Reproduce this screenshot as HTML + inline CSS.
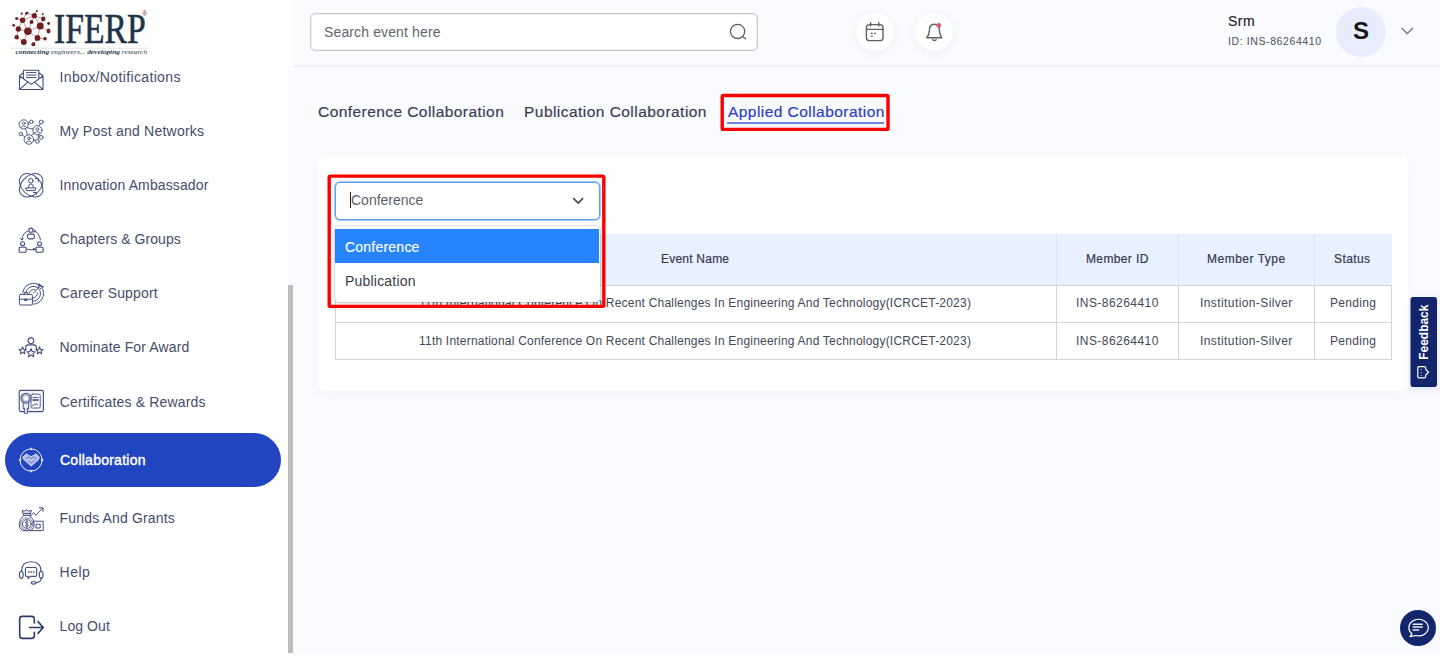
<!DOCTYPE html>
<html lang="en">
<head>
<meta charset="utf-8">
<title>IFERP Dashboard - Collaboration</title>
<style>
*{box-sizing:border-box;margin:0;padding:0}
html,body{width:1440px;height:656px;overflow:hidden;background:#fafbff;font-family:"Liberation Sans",Arial,sans-serif;color:#3a3f5c}
.t{position:absolute;white-space:nowrap;line-height:18px}
#sidebar{position:absolute;left:0;top:0;width:288px;height:656px;background:#fff}
#sidetop{position:absolute;left:0;top:0;width:293px;height:70px;background:#fff}
#scroll{position:absolute;left:288px;top:285px;width:5px;height:368px;background:#bdbdbd}
#botline{position:absolute;left:0;top:655px;width:1440px;height:1px;background:#fff}
#sbgap{position:absolute;left:288px;top:653px;width:5px;height:3px;background:#fff}
#icons{position:absolute;left:0;top:0}
.lbl{font-size:14px;color:#464c6b;left:60px}
#pill{position:absolute;left:5px;top:433px;width:276px;height:54px;background:#2145c0;border-radius:27px}
#header{position:absolute;left:293px;top:0;width:1147px;height:67px;background:#fafbff;border-bottom:2px solid #f1f3fb}
#search{position:absolute;left:310px;top:13px;width:448px;height:38px;border:1px solid #c9c9cc;border-radius:5px;background:#fff;box-shadow:inset 0 0 0 1px #f1f1f2}
.circ{position:absolute;top:13px;width:38px;height:38px;border-radius:50%;background:#fff;box-shadow:0 2px 8px rgba(80,90,140,.07)}
#avatar{position:absolute;left:1336px;top:7px;width:50px;height:50px;border-radius:50%;background:#e8edfe}
.tab{font-size:15.5px;color:#3a3e55;-webkit-text-stroke:.2px #3a3e55}
#card{position:absolute;left:318px;top:156px;width:1090px;height:235px;background:#fff;border-radius:6px;box-shadow:0 3px 8px rgba(90,110,200,.045)}
#tbl{position:absolute;left:335px;top:234px;width:1057px;height:126px}
#tbl div{position:absolute}
.red{position:absolute;border:3px solid #ff0000;border-radius:2px}
#sel{position:absolute;left:335px;top:182px;width:265px;height:38px;border:1px solid #5f9df3;border-radius:5px;background:#fff;box-shadow:0 0 0 1px #a9c9f8}
#menu{position:absolute;left:335px;top:226px;width:265px;height:76px;background:#fff;box-shadow:0 0 0 1px rgba(0,0,0,.1),0 3px 6px rgba(0,0,0,.12);border-radius:4px}
#fb{position:absolute;left:1411px;top:297px;width:26px;height:90px;background:#14266b;border-radius:3px;box-shadow:-.5px 0 0 #14266b,0 2px 6px rgba(20,38,107,.12)}
#chat{position:absolute;left:1400px;top:610px;width:36px;height:36px;border-radius:50%;background:#14266b}
.th{font-size:12px;color:#343a4e;-webkit-text-stroke:.2px #343a4e}
.td{font-size:12px;color:#444857}
</style>
</head>
<body>
<div id="sidebar"></div>
<div id="sidetop"></div>
<div id="scroll"></div><div id="sbgap"></div><div id="botline"></div>
<div id="pill"></div>
<!--ICONS_START--><svg id="icons" width="293" height="656" viewBox="0 0 293 656">
<!-- logo -->
<g stroke="#8a3a3a" stroke-width=".5" fill="none">
<path d="M27.9 31.3L40.2 26M27.9 31.3L22.6 20.3M27.9 31.3L18.3 29M27.9 31.3L37.5 37.9M27.9 31.3L23.8 42M27.9 31.3L31.5 22.1M40.2 26L34.3 15.7M40.2 26L37.5 37.9M40.2 26L43.2 18.9M40.2 26L48.5 31.1M22.6 20.3L34.3 15.7M22.6 20.3L18.3 29M22.6 20.3L26.7 13.2M34.3 15.7L43.2 18.9M34.3 15.7L36.8 11.1M34.3 15.7L26.7 13.2M37.5 37.9L45 38.8M37.5 37.9L33.4 44.3M18.3 29L16.7 37.2M31.5 22.1L34.3 15.7M23.8 42L16.7 37.2M22.6 20.3L16.7 18.5"/>
</g>
<g fill="#6f1f20">
<circle cx="27.9" cy="31.3" r="3.8"/><circle cx="40.2" cy="26" r="3.5"/><circle cx="22.6" cy="20.3" r="2.7"/><circle cx="34.3" cy="15.7" r="2.6"/><circle cx="18.3" cy="29" r="2.7"/><circle cx="37.5" cy="37.9" r="2.9"/><circle cx="23.8" cy="42" r="3"/><circle cx="31.5" cy="22.1" r="2"/><circle cx="43.2" cy="18.9" r="2.3"/><ellipse cx="48.5" cy="31.1" rx="2" ry="2.5"/><circle cx="16.7" cy="37.2" r="2.2"/><circle cx="33.4" cy="44.3" r="2"/><circle cx="45" cy="38.8" r="1.8"/><circle cx="48.6" cy="23.5" r="1.4"/><circle cx="16.7" cy="18.5" r="1.5"/><circle cx="13.7" cy="25.3" r="1.4"/><ellipse cx="26.7" cy="13.2" rx="2" ry="1.2" transform="rotate(-25 26.7 13.2)"/><circle cx="21.7" cy="13.7" r="1.1"/><circle cx="36.8" cy="11.1" r="1"/><circle cx="42.7" cy="13.9" r="1"/>
</g>
<text x="54" y="42.9" font-family="'Liberation Serif',serif" font-size="41.7" fill="#1d3349" stroke="#1d3349" stroke-width=".6" textLength="91.6" lengthAdjust="spacingAndGlyphs">IFERP</text>
<text x="142.3" y="16.2" font-family="'Liberation Sans',sans-serif" font-size="6.5" fill="#7a2a2a">®</text>
<path d="M10 48.2H148" stroke="#d9d9d9" stroke-width=".8"/>
<text x="15.6" y="54.2" font-family="'Liberation Serif',serif" font-size="6.6" font-style="italic" fill="#2a3a4c" textLength="131.5" lengthAdjust="spacingAndGlyphs"><tspan font-weight="bold">connecting</tspan> engineers... <tspan font-weight="bold">developing</tspan> research</text>

<g fill="none" stroke="#434d7d" stroke-width="1.1" stroke-linecap="round" stroke-linejoin="round">
<!-- inbox -->
<path d="M19.5 75.8V89.5H43V75.8M19.5 75.8L23.4 72.8M43 75.8L38.8 72.8M23.4 78.6V70.3H38.8V78.6M19.5 76L31.2 84.4L43 76M19.7 89.3L27.8 82.2M42.8 89.3L34.7 82.2"/>
<path d="M26.5 72.6H36M26.5 75.1H36M26.5 77.6H36" stroke-width="1"/>
<!-- network -->
<g stroke-width=".9" transform="translate(0 .7)">
<circle cx="23.7" cy="123.7" r="4.6"/><circle cx="37.4" cy="129.5" r="4.6"/><circle cx="28.9" cy="138.8" r="4.8"/>
<circle cx="31.4" cy="121.2" r="1.7"/><circle cx="41.2" cy="121.3" r="1.9"/><circle cx="20.8" cy="133.3" r="1.7"/><circle cx="41.2" cy="136.7" r="1.9"/><circle cx="37.4" cy="140.7" r="1.9"/>
<path d="M28 122.3L29.8 121.7M40.3 123L38.9 125.2M27 127L33.2 128.4M25.5 128L27.5 134.2M33.8 132.3L31.5 134.8M22.3 134.2L24.8 136.3M39 133.8L40.2 135M33.5 139.6L35.6 140.2M38.5 134L38 138.8"/>
<circle cx="23.7" cy="122.6" r="1.3"/><path d="M21.2 126.6Q23.7 123.6 26.2 126.6"/>
<circle cx="37.4" cy="128.4" r="1.3"/><path d="M34.9 132.4Q37.4 129.4 39.9 132.4"/>
<circle cx="28.9" cy="137.6" r="1.3"/><path d="M26.3 141.8Q28.9 138.6 31.5 141.8"/>
</g>
<!-- innovation -->
<g stroke-width="1">
<ellipse cx="31.2" cy="185.3" rx="13.5" ry="9.5" transform="rotate(45 31.2 185.3)"/>
<ellipse cx="31.2" cy="185.3" rx="13.5" ry="9.5" transform="rotate(-45 31.2 185.3)"/>
<circle cx="30.9" cy="180.8" r="2.3"/>
<path d="M28.4 187.5Q28.6 183.9 30.9 183.9Q33.2 183.9 33.4 187.5M26 188H36L35 190.6H27ZM35.4 178.5H38.2V181.6M33.5 192.5H36.3V194.6"/>
</g>
<!-- chapters -->
<g stroke-width="1.1">
<circle cx="30.9" cy="230.2" r="2.1"/><rect x="27.5" y="234.1" width="6.8" height="4.8" rx="1.6"/>
<circle cx="22.6" cy="243.7" r="2"/><rect x="19.2" y="247.2" width="6.9" height="5" rx=".8"/>
<circle cx="39.5" cy="243.7" r="2"/><rect x="36.1" y="247.2" width="7" height="5" rx=".8"/>
<path d="M21.8 239.6Q22.6 232.8 28 230.9M34 230.8Q39.6 232.8 40.4 239.8M26.8 249.2Q31 250.6 35.3 249.2" stroke-width="1"/>
<path d="M20.6 238.6L21.8 240.2L23.2 238.7M34.2 229.6L35.8 231.5L33.6 232M33.4 248.3L35.3 249.2L33.8 250.6" stroke-width="1"/>
</g>
<!-- career -->
<g stroke-width="1">
<path d="M22.8 292.5A10.6 10.6 0 0 1 40.5 286.2M42.6 288.9A10.6 10.6 0 0 1 33 304.2"/>
<path d="M25.8 292.8A7.5 7.5 0 0 1 37.5 287.6M40 290.8A7.5 7.5 0 0 1 33.2 301.2"/>
<path d="M29.2 292.8A4.4 4.4 0 0 1 35.2 289.8M37.3 293A4.4 4.4 0 0 1 33.2 298"/>
<path d="M33.5 293.2L41.5 285M38.2 287.8L39.2 283.6L41 286.2L43.6 286.6L39.6 289.2Z" />
<rect x="19.4" y="294.4" width="13" height="10.6" rx="1.2" fill="#fff"/>
<path d="M19.4 299.2H32.4M24.2 294.2V292.6H27.8V294.2M25 299.2H27V300.6H25Z"/>
</g>
<!-- nominate -->
<g stroke-width="1.1">
<circle cx="30.9" cy="340.8" r="2.9"/>
<path d="M25.6 349.5V347.6Q25.6 344.9 28.4 344.9H33.6Q36.4 344.9 36.4 347.6V349.5"/>
<path d="M22.6 346.9L23.6 349.3L26.2 349.5L24.2 351.2L24.8 353.8L22.6 352.4L20.4 353.8L21 351.2L19 349.5L21.6 349.3Z" fill="#fff"/>
<path d="M39.5 346.9L40.5 349.3L43.1 349.5L41.1 351.2L41.7 353.8L39.5 352.4L37.3 353.8L37.9 351.2L35.9 349.5L38.5 349.3Z" fill="#fff"/>
<path d="M31.1 348.6L32.3 351.5L35.4 351.7L33 353.7L33.8 356.8L31.1 355.1L28.4 356.8L29.2 353.7L26.8 351.7L29.9 351.5Z" fill="#fff"/>
</g>
<!-- certificate -->
<g stroke-width="1.1">
<rect x="19.2" y="390.4" width="24.2" height="21.2" rx="1.6" fill="#f5f6fb"/>
<rect x="31" y="394.2" width="9.2" height="13.8" rx="1.4" fill="#fff" stroke-width=".9"/>
<path d="M32.8 397.4H38.2M32.8 399.4H38.2M32.8 400.6H38.2M32.4 405.4L35 404.6L36.6 403.6L37.6 405.2" stroke-width=".9"/>
<path d="M23.2 402.2V409.2L24.6 408L24.6 413.4H27.4V408.2L28.6 409.2V402.2" fill="#eceef6" stroke-width=".9"/>
<circle cx="25.9" cy="398.2" r="5" fill="#dfe3f0"/><circle cx="25.9" cy="398.2" r="3.6" stroke-width=".6"/><circle cx="25.9" cy="398.2" r="1.9" fill="#fff" stroke="none"/>
</g>
<!-- collaboration -->
<g stroke="#fff" stroke-width="1" opacity=".92">
<circle cx="31.1" cy="460" r="11.1"/>
<path d="M31.1 448.2V449.6M31.1 470.4V471.8M19.3 460H20.7M41.5 460H42.9" stroke-width="1.4"/>
<path d="M22.8 457.2L26.4 453.9L28.6 455.4L31.1 456.6L33.6 455.4L35.8 453.9L39.4 457.2L38.4 459.6L31.2 466L23.8 459.6Z" fill="#fff" fill-opacity=".72" stroke-opacity=".8"/>
<path d="M26.2 458.2L29 456.8L31.2 458.6L33.4 456.8L36.2 458.4M28.2 461L31.2 463.2L34.4 460.6" stroke="#2145c0" stroke-width=".8" stroke-opacity=".7"/>
</g>
<!-- funds -->
<g stroke-width="1">
<path d="M23.6 515.6L22.2 510.6L24.6 511.2L26.6 509.8L28.6 511.2L31.4 510.4L29.8 515.6M23.8 513.4H29.8" fill="#e9ebf4"/>
<path d="M23.6 515.6Q19.2 519 19.2 524.4Q19.2 530.8 26 530.8H28Q34.2 530.8 34.2 524.4Q34.2 519 29.8 515.6Z" fill="#fff"/>
<circle cx="26.8" cy="524" r="4.4"/><circle cx="26.8" cy="524" r="6.1" stroke-width=".7"/>
<path d="M28.2 522.2Q26.8 521 25.6 522Q24.8 523.4 26.8 524Q28.8 524.6 28 526Q26.8 527 25.2 525.8M26.8 520.6V527.6" stroke-width=".9"/>
<path d="M29.8 517L33.6 512.6L35.8 515.2L42.6 508.2M39.4 507.8H43V511.4"/>
<path d="M33.6 521.2H43.2V530.6H30M36.4 524.2H40.2V528H36.4Z"/>
</g>
<!-- help -->
<g stroke-width="1.1">
<path d="M21.4 571.6Q21.4 561.8 31.2 561.8Q41.1 561.8 41.1 571.6"/>
<ellipse cx="21.3" cy="574.8" rx="1.9" ry="3.6"/><ellipse cx="41.2" cy="574.8" rx="1.9" ry="3.6"/>
<path d="M41.2 578.4Q41.2 582 36 582.6"/><ellipse cx="33.6" cy="582.8" rx="2.3" ry="1.3"/>
<path d="M26.9 567.5H35.2Q36.7 567.5 36.7 569V574.9Q36.7 576.4 35.2 576.4H30.4L28.2 578.6V576.4H26.9Q25.4 576.4 25.4 574.9V569Q25.4 567.5 26.9 567.5Z"/>
<path d="M28.4 572H28.9M30.9 572H31.4M33.4 572H33.9" stroke-width="1.3"/>
</g>
<!-- logout -->
<g stroke="#2f3a6c" stroke-width="1.6">
<path d="M34.3 623V619Q34.3 616.4 31.7 616.4H22.3Q19.7 616.4 19.7 619V635.8Q19.7 638.4 22.3 638.4H31.7Q34.3 638.4 34.3 635.8V632.4"/>
<path d="M29.6 627.5H42.8M38 621.6L43.2 627.5L38 633.4"/>
</g>
</g>
</svg>
<!--ICONS_END-->
<div class="t lbl" id="l0" style="left:59.6px;top:68px;letter-spacing:0.356px">Inbox/Notifications</div>
<div class="t lbl" id="l1" style="left:59.6px;top:122px;letter-spacing:0.232px">My Post and Networks</div>
<div class="t lbl" id="l2" style="left:59.6px;top:176px;letter-spacing:0.12px">Innovation Ambassador</div>
<div class="t lbl" id="l3" style="left:59.8px;top:230px;letter-spacing:0.076px">Chapters &amp; Groups</div>
<div class="t lbl" id="l4" style="left:59.8px;top:284px;letter-spacing:0.168px">Career Support</div>
<div class="t lbl" id="l5" style="left:59.6px;top:338px;letter-spacing:0.141px">Nominate For Award</div>
<div class="t lbl" id="l6" style="left:59.8px;top:393px;letter-spacing:0.154px">Certificates &amp; Rewards</div>
<div class="t lbl" id="l7" style="left:60px;top:451px;color:#fff;-webkit-text-stroke:.42px #fff;letter-spacing:0.248px">Collaboration</div>
<div class="t lbl" id="l8" style="left:59.6px;top:509px;letter-spacing:0.158px">Funds And Grants</div>
<div class="t lbl" id="l9" style="left:59.6px;top:563px;letter-spacing:0.45px">Help</div>
<div class="t lbl" id="l10" style="left:59.6px;top:617px;letter-spacing:0.069px">Log Out</div>

<div id="header"></div>
<div id="search"></div>
<div class="t" id="h0" style="left:324px;top:23px;font-size:14px;color:#62656c;letter-spacing:0.129px">Search event here</div>
<div class="circ" style="left:856px"></div>
<div class="circ" style="left:915px"></div>
<div class="t" id="h1" style="left:1228px;top:12px;font-size:14px;color:#1f2024;-webkit-text-stroke:.15px #1f2024;letter-spacing:0.5px">Srm</div>
<div class="t" id="h2" style="left:1228px;top:32px;font-size:10.5px;color:#4d5058;letter-spacing:0.601px">ID: INS-86264410</div>
<div id="avatar"></div>
<div class="t" id="h3" style="left:1353px;top:13px;font-size:24px;line-height:36px;font-weight:bold;color:#151515;letter-spacing:0px">S</div>


<div class="t tab" id="t0" style="left:318px;top:103px;letter-spacing:0.434px">Conference Collaboration</div>
<div class="t tab" id="t1" style="left:524px;top:103px;letter-spacing:0.459px">Publication Collaboration</div>
<div class="t tab" id="t2" style="left:728px;top:103px;color:#2b40c2;-webkit-text-stroke:.2px #2b40c2;letter-spacing:0.45px">Applied Collaboration</div>
<div style="position:absolute;left:727px;top:122px;width:157px;height:2px;background:#6f84da"></div>
<svg style="position:absolute;left:700px;top:80px" width="220" height="70" viewBox="700 80 220 70"><rect x="722.2" y="95.5" width="165.8" height="33.9" rx="1.2" fill="none" stroke="#ff0000" stroke-width="3.4"/></svg>

<div id="card"></div>
<div id="tbl">
  <div style="left:0;top:0;width:1057px;height:52px;background:#e7f1ff"></div>
  <div style="left:721px;top:0;width:1px;height:52px;background:#dce2fa"></div>
  <div style="left:843px;top:0;width:1px;height:52px;background:#dce2fa"></div>
  <div style="left:979px;top:0;width:1px;height:52px;background:#dce2fa"></div>
  <div style="left:0;top:51px;width:1057px;height:75px;border:1px solid #d4d4d4"></div>
  <div style="left:0;top:88px;width:1057px;height:1px;background:#d4d4d4"></div>
  <div style="left:721px;top:51px;width:1px;height:75px;background:#d4d4d4"></div>
  <div style="left:843px;top:51px;width:1px;height:75px;background:#d4d4d4"></div>
  <div style="left:979px;top:51px;width:1px;height:75px;background:#d4d4d4"></div>
</div>
<div class="t th" id="c0" style="left:661px;top:250px;letter-spacing:0.221px">Event Name</div>
<div class="t th" id="c1" style="left:1086px;top:250px;letter-spacing:0.37px">Member ID</div>
<div class="t th" id="c2" style="left:1207px;top:250px;letter-spacing:0.5px">Member Type</div>
<div class="t th" id="c3" style="left:1334px;top:250px;letter-spacing:0.4px">Status</div>
<div class="t td" id="r0" style="left:419px;top:294px;letter-spacing:0.21px">11th International Conference On Recent Challenges In Engineering And Technology(ICRCET-2023)</div>
<div class="t td" id="r1" style="left:1076px;top:294px;letter-spacing:0.452px">INS-86264410</div>
<div class="t td" id="r2" style="left:1200px;top:294px;letter-spacing:0.41px">Institution-Silver</div>
<div class="t td" id="r3" style="left:1330px;top:294px;letter-spacing:0.333px">Pending</div>
<div class="t td" id="s0" style="left:419px;top:332px;letter-spacing:0.21px">11th International Conference On Recent Challenges In Engineering And Technology(ICRCET-2023)</div>
<div class="t td" id="s1" style="left:1076px;top:332px;letter-spacing:0.452px">INS-86264410</div>
<div class="t td" id="s2" style="left:1200px;top:332px;letter-spacing:0.41px">Institution-Silver</div>
<div class="t td" id="s3" style="left:1330px;top:332px;letter-spacing:0.333px">Pending</div>

<div id="sel"></div>
<div style="position:absolute;left:350px;top:192px;width:1px;height:16px;background:#222"></div>
<div class="t" id="m0" style="left:351px;top:191px;font-size:14px;color:#5d606b;letter-spacing:-0.002px">Conference</div>
<div id="menu"></div>
<div style="position:absolute;left:335px;top:229px;width:264px;height:34px;background:#2684ff"></div>
<div class="t" id="m1" style="left:345px;top:238px;font-size:14px;color:#fff;-webkit-text-stroke:.15px #fff;letter-spacing:0.223px">Conference</div>
<div class="t" id="m2" style="left:345px;top:272px;font-size:14px;color:#3b3d45;letter-spacing:0.2px">Publication</div>
<svg style="position:absolute;left:320px;top:165px" width="300" height="155" viewBox="320 165 300 155"><rect x="329.2" y="176.1" width="274.6" height="130.3" rx="1.2" fill="none" stroke="#ff0000" stroke-width="3.4"/></svg>
<div id="fb"></div>
<div id="chat"></div>
<!--R_START--><svg style="position:absolute;left:293px;top:0" width="1147" height="656" viewBox="293 0 1147 656">
<g fill="none" stroke="#5d5f66" stroke-linecap="round" stroke-linejoin="round">
<!-- search -->
<circle cx="737.6" cy="31.4" r="7.1" stroke-width="1.3"/><path d="M742.6 36.7L745.6 38.8" stroke-width="1.3"/>
<!-- calendar -->
<rect x="866.4" y="24.6" width="16.6" height="16" rx="3.2" stroke-width="1.4"/>
<path d="M866.6 29.4H882.8M870.6 22.8V26M878.8 22.8V26" stroke-width="1.4"/>
<path d="M871.2 33.4H872.2M874.4 33.4H875.4M871.2 36.2H872.2" stroke-width="1.3"/>
<!-- bell -->
<path d="M934.4 24.2C931 24.2 929.4 27 929.4 30.2C929.4 34 928.2 36 926.8 37.8H941.8C940.6 36 939.4 34 939.4 30.2C939.4 27 937.8 24.2 934.4 24.2Z" stroke-width="1.4"/>
<path d="M932.6 39.8Q934.4 41.4 936.2 39.8" stroke-width="1.4"/>
<!-- user chevron -->
<path d="M1401.9 28.3L1407.2 33.7L1412.5 28.3" stroke="#74767c" stroke-width="1.25"/>
<!-- select chevron -->
<path d="M573.8 198.7L578.2 203.1L582.6 198.7" stroke="#4c4c4c" stroke-width="1.7"/>
</g>
<circle cx="938.8" cy="25.4" r="2.4" fill="#e05a70"/>
<!-- feedback -->
<g transform="translate(1427.8 359.7) rotate(-90)">
<text x="0" y="0" font-family="'Liberation Sans',sans-serif" font-size="12" font-weight="bold" fill="#fff" textLength="55" lengthAdjust="spacingAndGlyphs">Feedback</text>
</g>
<g fill="none" stroke="#fff" stroke-width="1.2" stroke-linejoin="round">
<path d="M1418.8 366.7H1424.2Q1425.8 366.7 1425.8 368.3V369.6L1428.6 372.3L1425.8 375V376.2Q1425.8 377.8 1424.2 377.8H1418.8Q1417.8 377.8 1417.8 376.8V367.7Q1417.8 366.7 1418.8 366.7Z"/>
<path d="M1421.3 369.3V370.1M1421.3 371.9V372.7M1421.3 374.9V375.7" stroke-width="1.2"/>
</g>
<!-- chat -->
<g transform="translate(-.4 -.7)" fill="none" stroke="#fff" stroke-width="1.2" stroke-linecap="round" stroke-linejoin="round">
<path d="M1412.4 634.4A9.7 8.3 0 1 1 1416 636.2L1410.4 637.4Z"/>
<path d="M1413.6 625H1422.6M1413.6 627.8H1422.6M1413.6 630.6H1419" stroke-width="1.5" stroke="#e6e9f6"/>
</g>
</svg>
<!--R_END-->
</body>
</html>
